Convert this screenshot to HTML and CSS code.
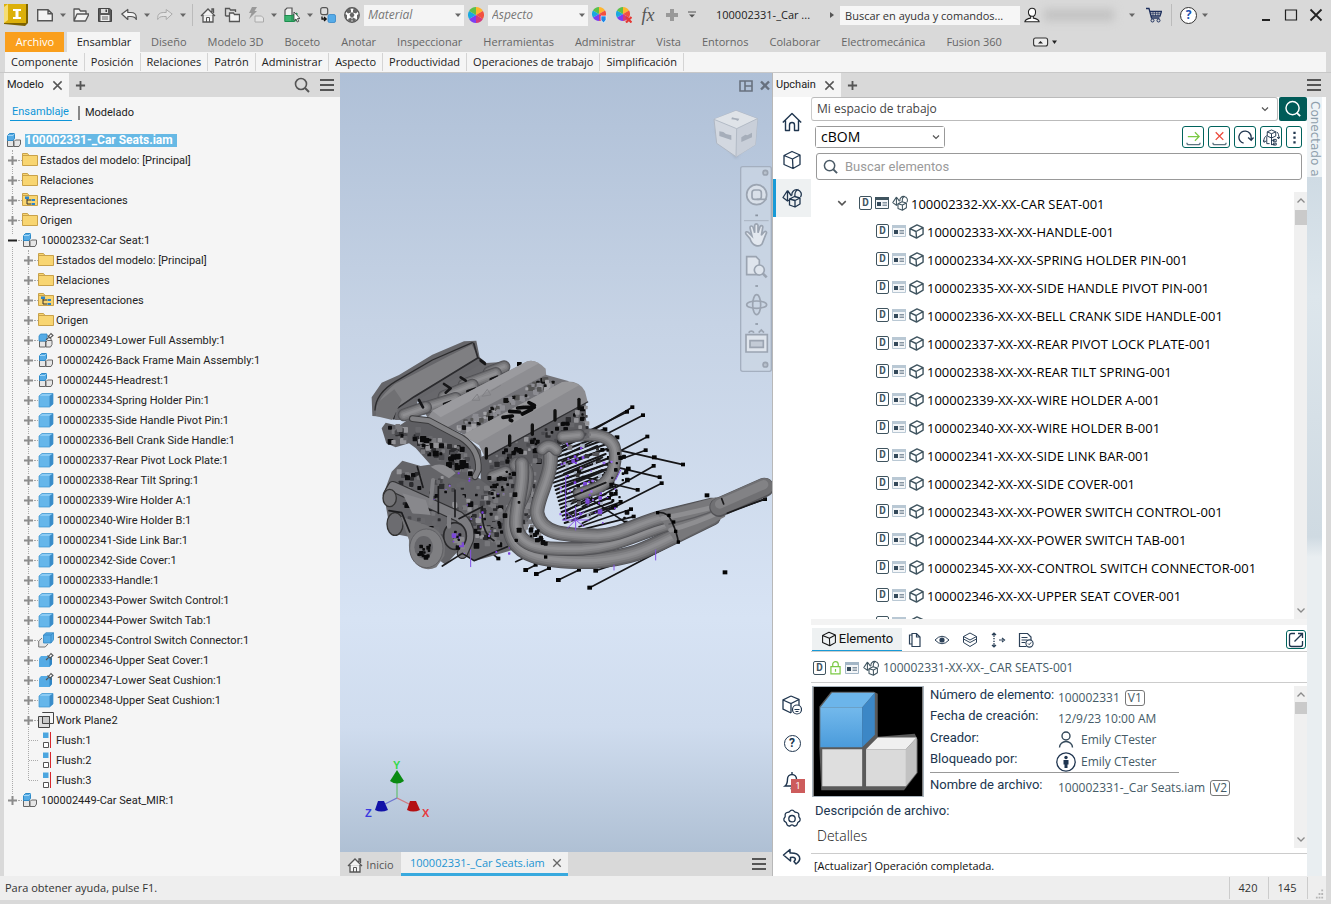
FILE: index.html
```html
<!DOCTYPE html>
<html lang="es">
<head>
<meta charset="utf-8">
<title>100002331-_Car Seats.iam</title>
<link rel="stylesheet" href="styles.css">
</head>
<body>
<svg class="sprite" aria-hidden="true">
  <defs>
    <linearGradient id="cubeface" x1="0" y1="0" x2="0" y2="1"><stop offset="0" stop-color="#73b9ec"/><stop offset="1" stop-color="#4a9bdb"/></linearGradient>
  </defs>
  <symbol id="caret" viewBox="0 0 8 8"><path d="M1 2.500h6L4 6z" fill="#666"/></symbol>
  <symbol id="chev" viewBox="0 0 8 8"><path d="M1 2.500l3 3 3-3" fill="none" stroke="#555" stroke-width="1.200"/></symbol>
  <symbol id="x" viewBox="0 0 12 12"><path d="M1.500 1.500l9 9M10.500 1.500l-9 9" fill="none" stroke="currentColor" stroke-width="1.600"/></symbol>
  <symbol id="plus" viewBox="0 0 12 12"><path d="M6 1v10M1 6h10" fill="none" stroke="#555" stroke-width="2"/></symbol>
  <symbol id="menu" viewBox="0 0 14 14"><path d="M0 2h14M0 7h14M0 12h14" stroke="#555" stroke-width="2"/></symbol>
  <symbol id="search" viewBox="0 0 16 16"><circle cx="7" cy="7" r="5.500" fill="none" stroke="currentColor" stroke-width="1.600"/><path d="M11 11l4 4" stroke="currentColor" stroke-width="2"/></symbol>
  <symbol id="home" viewBox="0 0 16 16"><path d="M1 9l7-7 7 7M3 8v7h10V8M12 5V2h1.500v4" fill="#f2f2f2" stroke="#555" stroke-width="1.300"/><path d="M6.500 15v-4.500h3V15" fill="none" stroke="#555"/></symbol>
  <symbol id="cube" viewBox="0 0 20 20"><path d="M10 1.500l8 3.500v9.500L11 18.500 2 14.500V5.500zM2 5.500l8.500 3.500L18 5M10.500 9l.5 9.500" fill="none" stroke="currentColor" stroke-width="1.300" stroke-linejoin="round"/></symbol>
  <symbol id="cubebold" viewBox="0 0 16 16"><path d="M8.500 1L15 3.800v7L8 15 1 11.500V5zM1 5l6.500 3L15 3.800M7.500 8L8 15" fill="none" stroke="#3f545f" stroke-width="1.500" stroke-linejoin="round"/></symbol>
  <symbol id="shapes" viewBox="0 0 20 20"><g fill="none" stroke="currentColor" stroke-width="1.300" stroke-linejoin="round"><path d="M5.500 2.500L1 9.500l4.500 3.500 2-1M5.500 2.500L9.500 8M5.500 2.500V13"/><path d="M10 7.500a4.700 4.700 0 1 1 8.500 1.500M13 8.500C12.500 5 14 2 16.500 1.500"/><path d="M7.500 11l5-2.500L18 10v6l-5 3-5.500-2zM7.500 11l5.500 1.500L18 10M13 12.500V19"/></g></symbol>
  <symbol id="asm" viewBox="0 0 16 16"><path d="M1.500 8.500h6v6h-6zM8 9.500l1.500-1.500h5v4L13 14.500H8z" fill="#e6e6e6" stroke="#666"/><path d="M1.500 3.500l2-2h5v5l-1.500 2H1.500z" fill="#55abe5" stroke="#2e8ac8"/><path d="M1.500 3.500H7l1.500-2" fill="none" stroke="#a3d6f6"/></symbol>
  <symbol id="part" viewBox="0 0 16 16"><path d="M1 4l3-2.500h11V12l-3.500 3H1z" fill="#65b6ea"/><path d="M1 4l3-2.500h11L11.500 4z" fill="#8bcbf4"/><path d="M11.500 4L15 1.500V12l-3.500 3z" fill="#3a8bc8"/><path d="M1 4l3-2.500h11V12l-3.500 3H1z" fill="none" stroke="#3b93cf" stroke-width=".7"/></symbol>
  <symbol id="pin" viewBox="0 0 16 16"><path d="M8 8l3-3M9.500 3.500l4 4M10.500 4.500l2.500-3 2 2-3 2.500" fill="#fff" stroke="#555" stroke-width="1.100"/></symbol>
  <symbol id="asmpin" viewBox="0 0 16 16"><path d="M1.500 9h6v6h-6zM8 10l1.500-1.500h4.500v4L12.500 15H8z" fill="#e6e6e6" stroke="#666"/><path d="M1 4l1.500-2H9v5L7.500 9H1z" fill="#55abe5" stroke="#2e8ac8" stroke-width=".8"/><use href="#pin"/></symbol>
  <symbol id="partpin" viewBox="0 0 16 16"><path d="M1 6.500L3 4h11v8l-2.500 3H1z" fill="#55abe5"/><path d="M11.500 7L14 5v7l-2.500 3z" fill="#2f85c4"/><use href="#pin"/></symbol>
  <symbol id="partsub" viewBox="0 0 16 16"><path d="M4 6L.7 9v6h6.500L10 12" fill="#e8e8e8" stroke="#777"/><path d="M5.500 3L8 .8h7.500v7L13 11H5.500z" fill="#55abe5" stroke="#2e85c0" stroke-width=".8"/><path d="M5.500 3H13l2.500-2.200M13 3v8" fill="none" stroke="#3080ba" stroke-width=".7"/></symbol>
  <symbol id="folder" viewBox="0 0 16 16"><path d="M.5 1.500h5l1.500 2h8.500v10H.5z" fill="#f8d571" stroke="#c9a24a"/><path d="M1 3.500h6" stroke="#c9a24a"/></symbol>
  <symbol id="rep" viewBox="0 0 16 16"><use href="#folder"/><path d="M5 5v7h4M5 8h4" fill="none" stroke="#333"/><path d="M3 4.500h4V7H3zM9.500 7h3.500v2H9.500zM9.500 11H13v2H9.500z" fill="#2e83c7"/></symbol>
  <symbol id="plane" viewBox="0 0 16 16"><path d="M4.500 1V.5h11v11H12" fill="none" stroke="#444"/><path d="M.5 4.500h11v11H.5z" fill="#ddd" stroke="#444"/><path d="M4.500 4.500h7v7h-7z" fill="#c9c9c9" stroke="#444"/></symbol>
  <symbol id="flush" viewBox="0 0 16 16"><path d="M5 .5h5.500v5.500H5z" fill="#4ca6df"/><path d="M5.500 10.500h5v5h-5z" fill="#fff" stroke="#555"/><path d="M12.500 0v16" stroke="#d8262c"/></symbol>
  <symbol id="card" viewBox="0 0 14 14"><path d="M.5 1.500h13v11H.5z" fill="#f4f6f8" stroke="currentColor"/><path d="M0 1h14v3H0z" fill="currentColor"/><path d="M2 6h4v4H2z" fill="#34495a"/><path d="M7.500 6.500H12M7.500 8H12M7.500 9.500H12" stroke="#7b8b98" stroke-width=".9"/></symbol>
  <symbol id="wheel" viewBox="0 0 16 16"><path d="M8 8V0a8 8 0 0 1 6.900 4z" fill="#ffb52e"/><path d="M8 8l6.900-4a8 8 0 0 1 0 8z" fill="#f2503f"/><path d="M8 8l6.900 4A8 8 0 0 1 8 16z" fill="#d43a7a"/><path d="M8 8v8a8 8 0 0 1-6.900-4z" fill="#7b3ff2"/><path d="M8 8l-6.900 4a8 8 0 0 1 0-8z" fill="#19a8e0"/><path d="M8 8L1.100 4A8 8 0 0 1 8 0z" fill="#5cc04a"/></symbol>
  <symbol id="user" viewBox="0 0 18 18"><path d="M9 1.500a4 4 0 0 1 4 4c0 3-1.500 5-4 5s-4-2-4-5a4 4 0 0 1 4-4zM7.500 10.500v2C4 13 1.500 14 1 16.500h16c-.5-2.500-3-3.500-6.500-4v-2" fill="#fff" stroke="#222" stroke-width="1.200"/></symbol>
  <symbol id="up" viewBox="0 0 8 8"><path d="M.5 5.500L4 2l3.500 3.500" fill="none" stroke="#8a8a8a" stroke-width="1.300"/></symbol>
  <symbol id="down" viewBox="0 0 8 8"><path d="M.5 2.500L4 6l3.500-3.500" fill="none" stroke="#8a8a8a" stroke-width="1.300"/></symbol>
</svg>

<header class="titlebar">
  <div class="quick">
    <button class="logo" aria-label="Inventor"><svg viewBox="0 0 24 22"><path d="M0 3l3-3h21v19l-3 3-21-2z" fill="#7d6200"/><path d="M0 0h22v19H0z" fill="#dcb00a"/><path d="M0 3l4-3v16l-4 3z" fill="#f5dd74"/><path d="M9 5h8v2h-2.500v6H17v2H9v-2h2.500V7H9z" fill="#fff"/></svg></button>
    <button class="tb" aria-label="Nuevo"><svg viewBox="0 0 16 16"><path d="M.7 2.700H11l4.300 4v7H.7zM11 2.700v4h4.300" fill="#f3f3f3" stroke="#555" stroke-width="1.400"/></svg></button>
    <button class="drop" aria-label="Más"><svg><use href="#caret"/></svg></button>
    <button class="tb" aria-label="Abrir"><svg viewBox="0 0 16 16"><path d="M1 14V2h5l1.500 2H13v3M1 14l3-7h12l-3.500 7z" fill="#f3f3f3" stroke="#555" stroke-width="1.300" stroke-linejoin="round"/></svg></button>
    <button class="tb" aria-label="Guardar"><svg viewBox="0 0 16 16"><path d="M1.500 1.500h11L14.500 3v11.500h-13z" fill="#5a5a5a" stroke="#444"/><path d="M4 2h7v4H4z" fill="#ddd"/><path d="M8.500 2.500h1.500V5H8.500z" fill="#444"/><path d="M3.500 8h9v6h-9z" fill="#eee"/><path d="M5 10h6M5 12h6" stroke="#666"/></svg></button>
    <button class="tb" aria-label="Deshacer"><svg viewBox="0 0 16 16"><path d="M.8 7l6-4.500v3h3c3.500 0 5.500 2 5.500 5v2c-1-2-2.500-3-5.500-3h-3v3z" fill="#f3f3f3" stroke="#555" stroke-width="1.200" stroke-linejoin="round"/></svg></button>
    <button class="drop" aria-label="Más"><svg><use href="#caret"/></svg></button>
    <button class="tb" aria-label="Rehacer"><svg viewBox="0 0 16 16"><path d="M15.200 7l-6-4.500v3h-3C2.700 5.500.7 7.500.7 10.500v2c1-2 2.500-3 5.500-3h3v3z" fill="#e2e2e2" stroke="#aaa" stroke-linejoin="round"/></svg></button>
    <button class="drop" aria-label="Más"><svg><use href="#caret"/></svg></button>
    <span class="vsep"></span>
    <button class="tb" aria-label="Inicio"><svg><use href="#home"/></svg></button>
    <button class="tb" aria-label="Carpetas"><svg viewBox="0 0 16 16"><path d="M1.500 9V1.500h4l1 1.500h5v2M1.500 9H5" fill="none" stroke="#555" stroke-width="1.300"/><path d="M5.500 14.500V6h4l1 1.500h5v7z" fill="#f3f3f3" stroke="#555" stroke-width="1.300"/></svg></button>
    <button class="tb" aria-label="Actualizar"><svg viewBox="0 0 16 16"><path d="M4 0h5L6.500 4H9L1 12l2.500-6H1z" fill="#999"/><path d="M7 9v6h8.500v-4l-2-2z" fill="#e5e5e5" stroke="#aaa"/></svg></button>
    <button class="drop" aria-label="Más"><svg><use href="#caret"/></svg></button>
    <button class="tb" aria-label="Seleccionar"><svg viewBox="0 0 16 16"><path d="M1 9V3l2-2h5v7" fill="#eee" stroke="#555" stroke-width="1.200"/><path d="M.8 8.500H8l5-2.500v7l-3 1.500H.8z" fill="#3cb371" stroke="#1d8d4e"/><path d="M8 8v6" stroke="#1d8d4e"/><path d="M10 5v8.500l2-1.500 1.200 3 1.500-.7-1.200-2.800H16z" fill="#fff" stroke="#333" stroke-width=".8"/></svg></button>
    <button class="drop" aria-label="Más"><svg><use href="#caret"/></svg></button>
    <button class="tb" aria-label="Vincular"><svg viewBox="0 0 16 16"><rect x=".7" y=".7" width="7" height="7" rx="2" fill="#ddd" stroke="#555" stroke-width="1.200"/><path d="M2 9.500V12h3.500M4 10l2.200 2L4 14" fill="none" stroke="#111" stroke-width="1.300"/><rect x="8" y="7.500" width="7.500" height="8" rx="1.500" fill="#55abe8" stroke="#3687c8" stroke-width=".8"/></svg></button>
    <button class="tb" aria-label="Material"><svg viewBox="0 0 16 16"><circle cx="8" cy="8" r="7.200" fill="#fff" stroke="#555" stroke-width="1.400"/><path d="M4 1.500l3 1v3l-3 1-2-2zM9 2.500l3-1 2 3-2 2-3-1zM7 5.500h2l1.500 2.500L9 10.500H7L5.500 8zM1 7l2 1v3l-1.500 1L.8 9zM15 7l-2 1v3l1.500 1 .7-3zM4 12l3-1.500 1 2-1 2.500-2-.5zM12 12l-3-1.500-1 2 1 2.500 2-.5z" fill="#666"/></svg></button>
    <label class="combo combo--dark"><select aria-label="Material"><option>Material</option></select><svg><use href="#caret"/></svg></label>
    <button class="tb" aria-label="Aspecto"><svg><use href="#wheel"/></svg></button>
    <label class="combo combo--dark"><select aria-label="Aspecto"><option>Aspecto</option></select><svg><use href="#caret"/></svg></label>
    <button class="tb" aria-label="Ajustar"><svg viewBox="0 0 16 16"><use href="#wheel" width="14" height="14"/><path d="M9 9h5v4l-2.500 3L9 13z" fill="#1e88e5" stroke="#fff" stroke-width=".6"/></svg></button>
    <button class="tb" aria-label="Borrar"><svg viewBox="0 0 16 16"><use href="#wheel" width="14" height="14"/><path d="M10 10l5.500 5.500M15.500 10L10 15.500" stroke="#e53935" stroke-width="2.200"/></svg></button>
    <button class="tb fx">fx</button>
    <button class="tb" aria-label="Añadir"><svg viewBox="0 0 16 16"><path d="M8 2v12M2 8h12" stroke="#999" stroke-width="4"/></svg></button>
    <button class="drop drop--wide" aria-label="Personalizar"><svg viewBox="0 0 8 8"><path d="M0 1h8" stroke="#555"/><path d="M1 3.500h6L4 6.500z" fill="#555"/></svg></button>
  </div>
  <span class="doc">100002331-_Car ...</span>
  <svg class="tri" viewBox="0 0 8 8"><path d="M2 1l4 3-4 3z" fill="#555"/></svg>
  <input class="help" type="text" aria-label="Buscar" value="Buscar en ayuda y comandos...">
  <div class="account">
    <button class="tb" aria-label="Cuenta"><svg><use href="#user"/></svg></button>
    <span class="smudge"></span>
    <button class="drop" aria-label="Más"><svg><use href="#caret"/></svg></button>
    <button class="tb" aria-label="Carrito"><svg viewBox="0 0 16 16"><path d="M0 1.500h3l2.500 9.500h8M4 4.500h11.500L14 9H5" fill="none" stroke="#1d2f5c" stroke-width="1.300"/><path d="M7 4.500V9M9.500 4.500V9M12 4.500V9M4.500 6.700h10" stroke="#1d2f5c" stroke-width=".7"/><circle cx="6.500" cy="13.500" r="1.500" fill="none" stroke="#1d2f5c"/><circle cx="12.500" cy="13.500" r="1.500" fill="none" stroke="#1d2f5c"/></svg></button>
    <span class="vsep"></span>
    <button class="tb ask" aria-label="Ayuda">?</button>
    <button class="drop" aria-label="Más"><svg><use href="#caret"/></svg></button>
  </div>
  <div class="window">
    <button aria-label="Minimizar"><svg viewBox="0 0 14 14"><path d="M3 12h8" stroke="#222" stroke-width="2"/></svg></button>
    <button aria-label="Maximizar"><svg viewBox="0 0 14 14"><path d="M1.500 2h11v10h-11z" fill="none" stroke="#222" stroke-width="1.200"/></svg></button>
    <button aria-label="Cerrar"><svg viewBox="0 0 14 14"><path d="M1.500 1.500l11 11M12.500 1.500l-11 11" stroke="#222" stroke-width="1.800"/></svg></button>
  </div>
</header>

<nav class="tabs">
  <button class="tabs__file">Archivo</button>
  <button class="tabs__on">Ensamblar</button>
  <button>Diseño</button><button>Modelo 3D</button><button>Boceto</button><button>Anotar</button><button>Inspeccionar</button><button>Herramientas</button><button>Administrar</button><button>Vista</button><button>Entornos</button><button>Colaborar</button><button>Electromecánica</button><button>Fusion 360</button>
  <button class="tabs__fold" aria-label="Contraer"><svg viewBox="0 0 24 10"><rect x=".6" y="1" width="14" height="8" rx="2" fill="#eee" stroke="#333" stroke-width="1.100"/><path d="M5 6.500h5L7.500 4z" fill="#222"/><path d="M19 3.500h5l-2.500 3.500z" fill="#222"/></svg></button>
</nav>
<nav class="ribbon">
  <button>Componente</button><button>Posición</button><button>Relaciones</button><button>Patrón</button><button>Administrar</button><button>Aspecto</button><button>Productividad</button><button>Operaciones de trabajo</button><button>Simplificación</button>
</nav>

<main class="work">
  <section class="model">
    <div class="dock">
      <button class="dock__tab">Modelo <svg><use href="#x"/></svg></button>
      <button class="dock__add" aria-label="Añadir"><svg><use href="#plus"/></svg></button>
      <span class="grow"></span>
      <button class="dock__find" aria-label="Buscar"><svg><use href="#search"/></svg></button>
      <button class="dock__menu" aria-label="Menú"><svg><use href="#menu"/></svg></button>
    </div>
    <div class="modes"><a href="#asm" class="modes__on">Ensamblaje</a><a href="#mod">Modelado</a></div>
    <div class="root"><svg><use href="#asm"/></svg><strong>100002331-_Car Seats.iam</strong></div>
    <ul class="tree" id="tree"></ul>
  </section>

  <section class="stage">
    <div class="canvas">
      <svg class="wintools" viewBox="0 0 32 12"><path d="M1 1h12v10H1z" fill="none" stroke="#5c6470" stroke-width="1.600"/><path d="M6 1v10M6 6h7" stroke="#5c6470" stroke-width="1.600"/><path d="M22 1.500l8 8M30 1.500l-8 8" stroke="#5c6470" stroke-width="2.400"/></svg>
      <svg class="viewcube" viewBox="0 0 144 150"><path d="M8 60l64 88 56-88z" fill="#8f9caf" opacity=".5" filter="blur(4px)"/><path d="M6 28L72 2l64 24-6 78-58 36L14 100z" fill="#d3d8e0" stroke="#b0b8c4" stroke-width="3"/><path d="M6 28L72 2l64 24-62 30z" fill="#dfe3e8"/><path d="M74 56l62-30-6 78-58 36z" fill="#c9cfd9"/><path d="M6 28l68 28-2 84M74 56l62-30" fill="none" stroke="#b3bbc6" stroke-width="3"/><path d="M22 64l12 2 8 6 16 4v14l-18-6-18-6zM88 82l12-8 6 2 14-8v14L88 96zM60 22l8 2 14 2-4 7-8-4-12-1z" fill="#a6aeba"/></svg>
      <svg class="navbar" viewBox="0 0 96 618"><rect x="2" y="2" width="92" height="614" rx="6" fill="#cbd5e3" fill-opacity=".75" stroke="#a4afbf" stroke-width="4"/><g fill="none" stroke="#9ba4b1" stroke-width="5"><circle cx="76" cy="20" r="7" fill="#b7c0cc"/><circle cx="50" cy="86" r="30" fill="#d9e0e9"/><rect x="36" y="72" width="28" height="28" rx="8"/><path d="M50 100h30"/><path d="M12 164h74" stroke-width="2"/><path d="M30 218l-12-14c-4-8 4-8 8-4l10 10-6-24c0-8 8-8 10 0l4 14v-22c2-6 8-6 10 0v22l6-18c4-6 10-2 8 4l-4 22 8-10c6-4 10 0 6 6l-12 30c-8 10-28 8-36-16z" fill="#e3e8ef"/><path d="M20 272h28l10 10v44H20z" fill="#dfe5ed"/><circle cx="58" cy="312" r="15" fill="#dfe5ed"/><path d="M68 322l12 12" stroke-width="8"/><ellipse cx="50" cy="416" rx="30" ry="11"/><ellipse cx="50" cy="416" rx="12" ry="30"/><path d="M18 506h64v52H18z" fill="#dfe5ed"/><path d="M30 524h40v20H30z" fill="#c3cbd6"/><path d="M26 500c4-6 12-6 16 0M56 500l8-8 8 8"/><circle cx="76" cy="596" r="7" fill="#b7c0cc"/></g><path d="M46 148h8M46 360h8M46 474h8" stroke="#8993a0" stroke-width="5"/></svg>
      <svg class="engine" viewBox="0 0 1269 900" id="engine"></svg>
      <svg class="triad" viewBox="0 0 68 62"><path d="M33 38V14" stroke="#6bbf78" stroke-width="1.300"/><path d="M33 38l-16 8" stroke="#6d74d0" stroke-width="1.300"/><path d="M33 38l16 8" stroke="#d07a80" stroke-width="1.300"/><path d="M33 10l-7 11q7 5 14 0z" fill="#0a8a12"/><path d="M14 41h6l4 9q-7 3-13 0z" fill="#1212a8"/><path d="M52 41h-6l-3 9q6 3 13 0z" fill="#b40f12"/><text x="29" y="9" fill="#35d94a">Y</text><text x="1" y="57" fill="#3a3ae0">Z</text><text x="58" y="57" fill="#e63b40">X</text></svg>
    </div>
    <div class="files">
      <button class="files__home"><svg><use href="#home"/></svg>Inicio</button>
      <button class="files__on">100002331-_Car Seats.iam <svg><use href="#x"/></svg></button>
      <span class="grow"></span>
      <button class="dock__menu" aria-label="Menú"><svg><use href="#menu"/></svg></button>
    </div>
  </section>

  <section class="upchain">
    <div class="dock">
      <button class="dock__tab">Upchain <svg><use href="#x"/></svg></button>
      <button class="dock__add" aria-label="Añadir"><svg><use href="#plus"/></svg></button>
      <span class="grow"></span>
      <button class="dock__menu" aria-label="Menú"><svg><use href="#menu"/></svg></button>
    </div>
    <div class="upchain__body">
      <nav class="rail">
        <button aria-label="Inicio"><svg viewBox="0 0 20 20"><path d="M.8 10.500L10 1.500l9.200 9M3.500 8.500V18.500h4V13a2.500 2.500 0 0 1 5 0v5.500h4V8.500" fill="none" stroke="currentColor" stroke-width="1.400" stroke-linejoin="round"/></svg></button>
        <button aria-label="Elementos"><svg><use href="#cube"/></svg></button>
        <button class="rail__on" aria-label="BOM"><svg><use href="#shapes"/></svg></button>
        <span class="grow"></span>
        <button aria-label="Estado"><svg viewBox="0 0 20 20"><path d="M9 1l8 3.500v6M9 18l-8-4V5l8-4M1 5l8 3.500L17 4.500M9 8.500V18" fill="none" stroke="currentColor" stroke-width="1.300"/><circle cx="15" cy="14.500" r="4.500" fill="#fff" stroke="currentColor" stroke-width="1.200"/><path d="M12.500 14.500h5M13.500 16.500h3" stroke="currentColor"/></svg></button>
        <button class="rail__ask" aria-label="Ayuda"><span>?</span></button>
        <button class="rail__bell" aria-label="Avisos"><svg viewBox="0 0 20 20"><path d="M3 15c2-1.500 2.500-3 2.500-7a4.500 4.500 0 0 1 9 0c0 4 .5 5.500 2.500 7zM8.500 17.500h3M10 1v2" fill="none" stroke="currentColor" stroke-width="1.400"/></svg><b>1</b></button>
        <button aria-label="Ajustes"><svg viewBox="0 0 20 20"><path d="M7.700 2.500a2.600 2.600 0 0 1 4.600 0 2.600 2.600 0 0 0 2.200.8 2.600 2.600 0 0 1 2.300 3.200 2.600 2.600 0 0 0 .7 2.300 2.600 2.600 0 0 1-.9 4.100 2.600 2.600 0 0 0-1.300 1.900 2.600 2.600 0 0 1-3.500 2 2.600 2.600 0 0 0-3.600 0 2.600 2.600 0 0 1-3.500-2 2.600 2.600 0 0 0-1.300-1.900 2.600 2.600 0 0 1-.9-4.100 2.600 2.600 0 0 0 .7-2.300 2.600 2.600 0 0 1 2.300-3.200 2.600 2.600 0 0 0 2.200-.8z" fill="none" stroke="currentColor" stroke-width="1.300"/><circle cx="10" cy="9.700" r="3.200" fill="none" stroke="currentColor" stroke-width="1.300"/></svg></button>
        <button aria-label="Volver"><svg viewBox="0 0 20 20"><path d="M8 2.500L1.500 8l7 6V10.500c4-1 6.500 1 3.500 4l2 2.500c6-4 5-11.500-6-11z" fill="none" stroke="currentColor" stroke-width="1.500" stroke-linejoin="round"/></svg></button>
      </nav>
      <div class="pane">
        <div class="space">
          <label class="combo combo--space"><select aria-label="Espacio"><option>Mi espacio de trabajo</option></select><svg><use href="#chev"/></svg></label>
          <button class="space__go" aria-label="Buscar"><svg viewBox="0 0 20 20"><circle cx="9.500" cy="9" r="7.300" fill="none" stroke="#fff" stroke-width="1.600"/><path d="M14 14l4 4" stroke="#fff" stroke-width="2"/></svg></button>
        </div>
        <div class="bomrow">
          <label class="combo combo--bom"><select aria-label="BOM"><option>cBOM</option></select><svg><use href="#chev"/></svg></label>
          <span class="grow"></span>
          <button aria-label="Entregar"><svg viewBox="0 0 18 18"><path d="M3 8h12M10.500 3.500L15 8l-4.500 4.500" fill="none" stroke="#7ac943" stroke-width="1.300"/><path d="M2 14.500q0 2 2 2h10q2 0 2-2" fill="none" stroke="#5c7480" stroke-width="1.400"/></svg></button>
          <button aria-label="Cancelar"><svg viewBox="0 0 18 18"><path d="M5 3.500l8 8M13 3.500l-8 8" stroke="#ec4a3c" stroke-width="1.400"/><path d="M2 14.500q0 2 2 2h10q2 0 2-2" fill="none" stroke="#5c7480" stroke-width="1.400"/></svg></button>
          <button aria-label="Recargar"><svg viewBox="0 0 18 18"><path d="M7 15A6.500 6.500 0 1 1 15 9v2.500M11.800 9l3.200 3 2.500-3" fill="none" stroke="#20364f" stroke-width="1.400"/></svg></button>
          <button aria-label="Sincronizar"><svg viewBox="0 0 18 18"><path d="M9 1l4.500 2v4.500L9 9.500l-4.500-2V3zM4.500 3L9 5l4.500-2M9 5v12M9 12h3.500M9 16.500h3.500M11 11h3v2.500h-3zM11 15h3v2h-3zM1 14c-.5-4 1-6 3-7M0 11.500L1.200 14l2.300-1.500M4 8v7.500h3M14.500 3c2 1.500 2.500 4 2 7M15 8.500l1.500 2 1.500-2.500" fill="none" stroke="#20364f"/></svg></button>
          <button class="bomrow__more" aria-label="Más"><svg viewBox="0 0 4 18"><path d="M.8 3h2.400v2.400H.8zM.8 8h2.400v2.400H.8zM.8 13h2.400v2.400H.8z" fill="#20364f"/></svg></button>
        </div>
        <label class="find"><svg><use href="#search"/></svg><input type="text" placeholder="Buscar elementos" aria-label="Buscar elementos"></label>
        <div class="bom">
          <ul class="bom__list" id="bom"></ul>
          <div class="bar"><svg><use href="#up"/></svg><i></i><span class="grow"></span><svg><use href="#down"/></svg></div>
        </div>
        <div class="split"></div>
        <div class="subtabs">
          <button class="subtabs__on"><svg><use href="#cube"/></svg>Elemento</button>
          <button aria-label="Archivos"><svg viewBox="0 0 16 16"><path d="M6 1.500h4.500L14 5v9.500H6zM10.500 1.500V5H14M6 3H3.500v9H6" fill="none" stroke="currentColor" stroke-width="1.200"/></svg></button>
          <button aria-label="Vista"><svg viewBox="0 0 16 16"><path d="M1 8q7-7.500 14 0-7 7.500-14 0z" fill="none" stroke="currentColor"/><circle cx="8" cy="8" r="2.600" fill="currentColor"/></svg></button>
          <button aria-label="Capas"><svg viewBox="0 0 16 16"><path d="M8 1l6.500 3.500L8 8 1.500 4.500zM1.500 7L8 10.500 14.500 7M1.500 4.500V10.500L8 14.500l6.500-4V4.500" fill="none" stroke="currentColor" stroke-linejoin="round"/></svg></button>
          <button aria-label="Flujo"><svg viewBox="0 0 16 16"><path d="M4 5V1.500M2 3l2-2 2 2M4 11v3.500M2 13l2 2 2-2M9 8h4M12 6l2.500 2L12 10" fill="none" stroke="currentColor" stroke-width="1.200"/><path d="M3.300 6h1.400v1.200H3.300zM3.300 8.800h1.400V10H3.300z" fill="currentColor"/></svg></button>
          <button aria-label="Informe"><svg viewBox="0 0 16 16"><path d="M8.500 14.500h-7v-13h8L13 5v3M3.500 5.500h6M3.500 8h6M3.500 10.500h4" fill="none" stroke="currentColor" stroke-width="1.200"/><circle cx="11.500" cy="11.500" r="3.600" fill="#fff" stroke="currentColor" stroke-width="1.100"/><path d="M10 11.500l1.200 1.200 2-2.400" fill="none" stroke="currentColor"/></svg></button>
          <span class="grow"></span>
          <button class="subtabs__pop" aria-label="Abrir"><svg viewBox="0 0 16 16"><path d="M7 1.500H3.500q-2 0-2 2v9q0 2 2 2h9q2 0 2-2V9M6.500 9.500l8-8M10 1.500h4.500V6" fill="none" stroke="#20364f" stroke-width="1.300"/></svg></button>
        </div>
        <div class="item"><span class="d">D</span><svg class="lock" viewBox="0 0 12 16"><path d="M1 7h10v8H1zM3 7V4.500a3 3 0 0 1 6 0V7M6 9.500v3" fill="none" stroke="#7ac943" stroke-width="1.300"/></svg><svg class="card card--mid"><use href="#card"/></svg><svg class="shape"><use href="#shapes"/></svg><span>100002331-XX-XX-_CAR SEATS-001</span></div>
        <div class="detail">
          <div class="detail__main">
            <div class="detail__top">
              <svg class="thumb" viewBox="0 0 112 112"><path d="M0 0h112v112H0z" fill="#000"/><path d="M6 62V20L18 5h44l4 2v44l38-3 3 6v34l-14 18H8z" fill="#5a5a5a"/><path d="M9 64h41v38H9z" fill="#dedede"/><path d="M54 64l12-12h40L95 64z" fill="#f0f0f0"/><path d="M54 64h41v38H54z" fill="#dadada"/><path d="M95 64l11-12v36L95 102z" fill="#c2c2c2"/><path d="M7 21L19 6h44L50 21z" fill="#6cb5ea"/><path d="M7 21h43v41H7z" fill="url(#cubeface)"/><path d="M50 21L63 6v43L50 62z" fill="#3c87c6"/></svg>
              <dl class="meta">
                <div><dt>Número de elemento:</dt><dd>100002331 <em>V1</em></dd></div>
                <div><dt>Fecha de creación:</dt><dd>12/9/23 10:00 AM</dd></div>
                <div><dt>Creador:</dt><dd><svg viewBox="0 0 20 20"><circle cx="10" cy="6" r="4" fill="none" stroke="#34495a" stroke-width="1.400"/><path d="M3.500 17.500a6.500 6 0 0 1 13 0" fill="none" stroke="#34495a" stroke-width="1.400"/></svg>Emily CTester</dd></div>
                <div class="meta__lock"><dt>Bloqueado por:</dt><dd><svg viewBox="0 0 20 20"><circle cx="10" cy="10" r="9.200" fill="none" stroke="#1f3550" stroke-width="1.300"/><circle cx="10" cy="5.500" r="1.700" fill="#1f3550"/><path d="M7.500 8h5v4.500h-1V16h-3v-3.500h-1z" fill="#1f3550"/></svg>Emily CTester</dd></div>
                <div><dt>Nombre de archivo:</dt><dd>100002331-_Car Seats.iam <em>V2</em></dd></div>
              </dl>
            </div>
            <p class="desc">Descripción de archivo:</p>
            <h2>Detalles</h2>
          </div>
          <div class="bar"><svg><use href="#up"/></svg><i></i><span class="grow"></span><svg><use href="#down"/></svg></div>
        </div>
        <p class="log">[Actualizar] Operación completada.</p>
      </div>
      <aside class="edge"><span>Conectado a</span></aside>
    </div>
  </section>
</main>

<footer class="status"><span>Para obtener ayuda, pulse F1.</span><span class="grow"></span><span class="status__n">420</span><span class="status__n">145</span><svg viewBox="0 0 10 10"><path d="M7 0h2v2H7zM4 4h2v2H4zM7 4h2v2H7zM1 8h2v2H1zM4 8h2v2H4zM7 8h2v2H7z" fill="#b5b5b5"/></svg></footer>
<script src="app.js"></script>
</body>
</html>
```
FILE: styles.css
```css
* { box-sizing: border-box; }
body { margin: 0; min-height: 100vh; display: flex; flex-direction: column; background: #d9d9d9; padding-bottom: 4px; font: 11px/16px "Open Sans", "Noto Sans", sans-serif; color: #222; }
button { border: 0; background: none; padding: 0; margin: 0; font: inherit; color: inherit; display: flex; align-items: center; justify-content: center; flex: none; white-space: nowrap; }
ul, dl, dd, p, h2 { margin: 0; padding: 0; list-style: none; }
svg { flex: none; display: block; }
.sprite { position: absolute; width: 0; height: 0; }
.grow { flex: 1; }

.titlebar { height: 32px; display: flex; align-items: center; padding: 0 4px 2px; }
.quick, .account, .window { display: flex; align-items: center; flex: none; }
.logo { width: 24px; margin-right: 5px; }
.logo svg { width: 24px; height: 22px; }
.tb { width: 24px; height: 24px; }
.tb svg { width: 16px; height: 16px; }
.drop { width: 12px; height: 24px; }
.drop svg { width: 8px; height: 8px; }
.drop--wide { width: 16px; }
.vsep { width: 7px; height: 22px; border-left: 1px solid #bbb; }
.quick .vsep { width: 4px; margin-left: 3px; }
.combo { display: grid; align-items: center; }
.combo select, .combo svg { grid-area: 1 / 1; }
.combo select { appearance: none; width: 100%; border: 0; margin: 0; font: inherit; color: inherit; background: #f4f4f4; padding: 0 4px; }
.combo svg { justify-self: end; width: 8px; height: 8px; margin-right: 2px; }
.combo--dark { width: 100px; font-style: italic; font-size: 12px; color: #777; }
.combo--dark select { height: 21px; }
.fx { font: italic 18px/20px "Liberation Serif", serif; color: #555; }
.doc { margin-left: 16px; flex: none; }
.tri { width: 8px; height: 8px; margin: 0 4px 0 18px; }
.help { width: 180px; height: 19px; border: 0; background: #f6f6f6; padding: 0 5px; font: inherit; color: #333; }
.smudge { width: 70px; height: 12px; margin: 0 12px 0 0; background: #c3c3c3; filter: blur(4px); }
.account .vsep { margin-left: 5px; }
.account .drop { margin-right: 4px; }
.ask { width: 17px; height: 17px; border: 1px solid #333; border-radius: 9px; background: #fff; color: #2050b0; font-weight: bold; font-size: 12px; margin: 0 2px; }
.window { margin-left: auto; gap: 11px; padding: 0 4px 0 10px; }
.window svg { width: 14px; height: 14px; }

.tabs { display: flex; height: 20px; padding: 0 5px; color: #666; }
.tabs button { padding: 0 10px 0 11px; }
.tabs .tabs__file { background: #fa9f1c; color: #fff; width: 59px; margin-right: 3px; }
.tabs .tabs__on { background: #f5f5f5; color: #222; width: 73px; }
.tabs .tabs__fold { margin-left: 10px; }
.tabs__fold svg { width: 24px; height: 10px; }
.ribbon { display: flex; align-items: center; height: 20px; margin: 0 5px; background: #f5f5f5; }
.ribbon button { padding: 0 6px; height: 18px; border-right: 1px solid #d4d4d4; }

.work { flex: 1; display: flex; border-top: 1px solid #c8c8c8; padding: 0 5px 0 4px; }
.model { flex: none; width: 336px; background: #f5f5f5; font: 11px/20px Roboto, sans-serif; }
.dock { display: flex; height: 24px; background: #d9d9d9; align-items: stretch; }
.dock__tab { background: #f5f5f5; padding: 0 6px 0 3px; gap: 8px; font: 11px/24px Roboto, sans-serif; color: #222; }
.dock__tab svg { width: 11px; height: 11px; color: #555; }
.dock__add { width: 23px; }
.dock__add svg { width: 11px; height: 11px; }
.dock__find svg { width: 16px; height: 16px; color: #555; margin-right: 10px; }
.dock__menu { margin-right: 6px; }
.dock__menu svg { width: 14px; height: 14px; }
.modes { display: flex; padding: 7px 6px 0; gap: 6px; align-items: center; }
.modes a { color: #222; text-decoration: none; line-height: 14px; padding-left: 5px; border-left: 2px solid #888; }
.modes .modes__on { color: #0e95d8; border-left: 0; border-bottom: 1px solid #0e95d8; line-height: 16px; padding: 0 3px 0 2px; }
.root { display: flex; align-items: center; height: 20px; margin-top: 9px; padding-left: 2px; gap: 3px; }
.root svg { width: 16px; height: 16px; }
.root strong { background: #67b9e5; color: #fff; font-size: 12px; line-height: 13px; padding-right: 4px; }
.tree { position: relative; }
.tree ul { position: relative; padding-left: 16px; }
.tree::before, .tree ul::before { content: ""; position: absolute; top: 0; bottom: 10px; left: 8px; border-left: 1px dotted #aaa; }
.tree ul::before { left: 24px; }
.row { display: flex; align-items: center; height: 20px; padding-left: 3px; position: relative; }
.row button, .row .leaf { width: 11px; height: 11px; background: #f5f5f5; }
.row .leaf { background: linear-gradient(90deg, #f5f5f5 5px, transparent 5px); }
.row .stub { width: 4px; border-top: 1px dotted #aaa; }
.row .leaf + .stub { width: 9px; margin-left: -5px; }
.row button svg { width: 9px; height: 9px; }
.row > svg { width: 16px; height: 16px; margin-right: 2px; }
.row > span:last-child { padding-top: 1px; }
.row--part > svg { margin-right: 3px; }

.stage { flex: 1 1 433px; display: flex; flex-direction: column; min-width: 0; border-right: 1px solid #b8b8b8; }
.canvas { flex: 1; position: relative; overflow: hidden; background: linear-gradient(#afc0d7, #c6d3e5 32%, #d7e3f4 70%, #cfdcee 84%, #afc0d4); }
.canvas svg { position: absolute; }
.wintools { right: 1px; top: 7px; width: 32px; height: 12px; opacity: .85; }
.viewcube { right: 12px; top: 37px; width: 48px; height: 50px; }
.navbar { right: 0; top: 93px; width: 32px; height: 206px; }
.engine { right: 0; top: 247px; width: 423px; height: 300px; }
.triad { left: 24px; bottom: 30px; width: 68px; height: 62px; font: bold 11px "Liberation Sans", sans-serif; }
.files { display: flex; height: 24px; background: #d9d9d9; }
.files__home { width: 61px; gap: 3px; color: #555; padding-top: 2px; }
.files__home svg { width: 16px; height: 16px; }
.files__on { background: #f0f0f0; border-bottom: 3px solid #38a9de; color: #1d94d2; padding: 0 6px 0 9px; gap: 7px; line-height: 20px; }
.files__on svg { width: 10px; height: 10px; color: #666; }

.upchain { flex: 0 0 553px; display: flex; flex-direction: column; background: #fff; }
.upchain > .dock .dock__menu { margin-right: 5px; }
.upchain__body { flex: 1; display: flex; min-height: 0; }
.rail { flex: none; width: 38px; display: flex; flex-direction: column; padding-top: 6px; color: #20364f; }
.rail button { width: 38px; height: 38px; position: relative; }
.rail svg { width: 20px; height: 20px; }
.rail .rail__on { background: #eef1f2; border-left: 3px solid #189ad6; padding-right: 3px; }
.rail__ask span { width: 17px; height: 17px; border: 1px solid #20364f; border-radius: 9px; font: bold 12px/15px Roboto, sans-serif; }
.rail__bell b { position: absolute; left: 18px; top: 17px; width: 14px; height: 14px; background: #cd5c5c; color: #fff; font: 9px/14px Roboto, sans-serif; }
.pane { flex: 1; min-width: 0; display: flex; flex-direction: column; }
.space { display: flex; height: 24px; }
.combo--space { flex: 1; border: 1px solid #bbb; border-left-color: #ccc; border-radius: 3px; font-size: 12px; color: #444; }
.combo--space select, .combo--bom select { background: #fff; padding-left: 5px; }
.combo--space svg { margin-right: 8px; }
.space__go { width: 28px; margin-left: 1px; background: #005b58; border-radius: 2px; }
.space__go svg { width: 18px; height: 18px; }
.bomrow { display: flex; gap: 4px; margin: 5px 5px 0 4px; height: 22px; }
.bomrow button { width: 22px; border: 1px solid #00635d; border-radius: 3px; }
.bomrow button svg { width: 17px; height: 17px; }
.bomrow .bomrow__more { width: 16px; }
.combo--bom { width: 130px; border: 1px solid #999; border-radius: 3px; font: 14px/20px "Open Sans", sans-serif; color: #000; }
.combo--bom svg { margin-right: 4px; }
.find { display: flex; align-items: center; margin: 5px 5px 0; height: 27px; border: 1px solid #999; border-radius: 3px; padding-left: 6px; gap: 7px; }
.find svg { width: 15px; height: 15px; color: #4a5a66; }
.find input { flex: 1; border: 0; padding: 0; font: 13px/20px Roboto, sans-serif; outline: 0; }
.find input::placeholder { color: #9a9a9a; opacity: 1; }
.bom { display: flex; flex: 1 1 426px; min-height: 200px; height: 0; margin-top: 12px; }
.bom__list { flex: 1; overflow: hidden; padding-left: 65px; font: 13px/26px "Open Sans", sans-serif; color: #000; }
.bom__list li { height: 28px; display: flex; align-items: center; gap: 3px; }
.bom__list .label { padding-top: 1px; }
.bom__list .bom__top { margin: -3px 0 0 -40px; }
.twist { width: 8px; height: 8px; margin: 0 10px 0 2px; }
.twist svg { width: 10px; height: 10px; }
.d { width: 13px; height: 14px; flex: none; border: 1px solid #3f545f; border-radius: 2px; font: bold 10px/12px Roboto, sans-serif; text-align: center; color: #3f545f; }
.card { width: 14px; height: 14px; color: #b9c8d4; }
.card--dark { color: #3f545f; }
.card--mid { color: #a3b6c6; }
.cb { width: 15px; height: 15px; }
.shape { width: 16px; height: 16px; color: #3f545f; }
.bar { flex: none; width: 13px; background: #f0f0f0; display: flex; flex-direction: column; align-items: center; padding: 5px 0; }
.bar svg { width: 8px; height: 8px; }
.bar i { width: 12px; height: 15px; background: #cacaca; margin-top: 5px; }
.detail .bar i { height: 12px; margin-top: 3px; }
.split { height: 6px; background: #f3f3f3; }
.subtabs { display: flex; height: 27px; padding: 3px 1px 0; gap: 12px; border-bottom: 1px solid #ccc; color: #2c4158; align-items: center; }
.subtabs svg { width: 16px; height: 16px; }
.subtabs .subtabs__on { align-self: stretch; width: 90px; margin-right: -8px; background: #eef1f2; border-bottom: 1px solid #189ad6; gap: 2px; font: 13px/20px Roboto, sans-serif; color: #111; }
.subtabs .subtabs__pop { width: 20px; height: 19px; border: 1px solid #00635d; border-radius: 3px; }
.item { display: flex; align-items: center; height: 31px; padding: 1px 2px 0; border-bottom: 1px solid #ccc; gap: 4px; font-size: 12px; color: #445a66; }
.item .lock { width: 11px; height: 15px; }
.detail { display: flex; padding: 3px 0 5px; }
.detail__main { flex: 1; min-width: 0; }
.detail__top { display: flex; gap: 6px; padding-left: 1px; }
.thumb { width: 112px; height: 111px; border: 1px solid #a9b4bd; }
.meta { font-size: 12px; color: #445a66; }
.meta div { display: grid; grid-template-columns: 128px auto; align-items: center; height: 21px; white-space: nowrap; }
.meta dt { font: 13px/18px Roboto, sans-serif; color: #20364f; padding-bottom: 3px; }
.meta dd { display: flex; align-items: center; gap: 5px; padding-top: 2px; }
.meta dd svg { width: 20px; height: 20px; margin-left: -2px; }
.meta .meta__lock { width: 249px; height: 24px; border-bottom: 1px solid #999; margin-bottom: 3px; }
.meta em { font-style: normal; border: 1px solid #777; border-radius: 3px; line-height: 14px; padding: 0 2px; }
.desc { font: 13px/20px Roboto, sans-serif; color: #20364f; padding: 4px 0 0 4px; }
.detail h2 { font: 300 14px/20px "Open Sans", sans-serif; color: #111; padding: 5px 0 0 6px; }
.detail .bar { min-height: 162px; }
.log { border-top: 1px solid #ccc; height: 23px; padding: 4px 3px 0; color: #111; }
.edge { flex: none; width: 15px; margin-right: 4px; background: linear-gradient(#eef3f6 80px, #cfdbe4 80px, #dde6ec 200px, #cfdae2 440px, #e9eef1 460px); }
.edge span { writing-mode: vertical-rl; font: 12px/15px "DejaVu Sans", sans-serif; color: #8fa0ac; padding-top: 4px; }

.status { display: flex; height: 24px; align-items: center; margin-right: 5px; background: #eee; padding: 0 0 0 5px; color: #333; }
.status__n { width: 39px; height: 22px; line-height: 22px; text-align: center; border-left: 1px solid #ccc; padding-right: 2px; }
.status svg { width: 19px; height: 22px; padding: 12px 2px 0 7px; border-left: 1px solid #ccc; }
```
FILE: app.js
```javascript
const icon = (id, cls = "") => `<svg class="${cls}"><use href="#${id}"/></svg>`;
const PLUS = '<button aria-label="Expandir"><svg viewBox="0 0 9 9"><path d="M4.500 0v9M0 4.500h9" stroke="#8c8c8c" stroke-width="2"/></svg></button>';
const MINUS = '<button aria-label="Contraer"><svg viewBox="0 0 9 9"><path d="M0 4.500h9" stroke="#222" stroke-width="2"/></svg></button>';
const row = (ic, text, toggle = PLUS) =>
  `<div class="row ${/^(asm|part)/.test(ic) ? "row--part" : ""}">${toggle}<span class="stub"></span>${icon(ic)}<span>${text}</span></div>`;
const li = (...a) => `<li>${row(...a)}</li>`;
const LEAF = '<span class="leaf"></span>';

const folders = li("folder", "Estados del modelo: [Principal]") + li("folder", "Relaciones") +
  li("rep", "Representaciones") + li("folder", "Origen");
const children = [
  ["asmpin", "100002349-Lower Full Assembly:1"], ["asm", "100002426-Back Frame Main Assembly:1"],
  ["asm", "100002445-Headrest:1"], ["part", "100002334-Spring Holder Pin:1"],
  ["part", "100002335-Side Handle Pivot Pin:1"], ["part", "100002336-Bell Crank Side Handle:1"],
  ["part", "100002337-Rear Pivot Lock Plate:1"], ["part", "100002338-Rear Tilt Spring:1"],
  ["part", "100002339-Wire Holder A:1"], ["part", "100002340-Wire Holder B:1"],
  ["part", "100002341-Side Link Bar:1"], ["part", "100002342-Side Cover:1"],
  ["part", "100002333-Handle:1"], ["part", "100002343-Power Switch Control:1"],
  ["part", "100002344-Power Switch Tab:1"], ["partsub", "100002345-Control Switch Connector:1"],
  ["partpin", "100002346-Upper Seat Cover:1"], ["partpin", "100002347-Lower Seat Cushion:1"],
  ["part", "100002348-Upper Seat Cushion:1"], ["plane", "Work Plane2"],
  ["flush", "Flush:1", LEAF], ["flush", "Flush:2", LEAF], ["flush", "Flush:3", LEAF]
];
document.getElementById("tree").innerHTML = folders +
  `<li>${row("asm", "100002332-Car Seat:1", MINUS)}<ul>${folders}${children.map(c => li(...c)).join("")}</ul></li>` +
  li("asm", "100002449-Car Seat_MIR:1");

const parts = ["333-XX-XX-HANDLE", "334-XX-XX-SPRING HOLDER PIN", "335-XX-XX-SIDE HANDLE PIVOT PIN",
  "336-XX-XX-BELL CRANK SIDE HANDLE", "337-XX-XX-REAR PIVOT LOCK PLATE", "338-XX-XX-REAR TILT SPRING",
  "339-XX-XX-WIRE HOLDER A", "340-XX-XX-WIRE HOLDER B", "341-XX-XX-SIDE LINK BAR", "342-XX-XX-SIDE COVER",
  "343-XX-XX-POWER SWITCH CONTROL", "344-XX-XX-POWER SWITCH TAB", "345-XX-XX-CONTROL SWITCH CONNECTOR",
  "346-XX-XX-UPPER SEAT COVER"];
document.getElementById("bom").innerHTML =
  `<li class="bom__top"><button class="twist" aria-label="Contraer">${icon("chev")}</button><span class="d">D</span>${icon("card", "card card--dark")}${icon("shapes", "shape")}<span class="label">100002332-XX-XX-CAR SEAT-001</span></li>` +
  parts.map(p => `<li><span class="d">D</span>${icon("card", "card")}${icon("cubebold", "cb")}<span class="label">100002${p}-001</span></li>`).join("") +
  `<li><span class="d"></span>${icon("card", "card")}${icon("cubebold", "cb")}</li>`;

/* Engine model */
let seed = 7;
const rnd = () => (seed = (seed * 16807) % 2147483647) / 2147483647;
const shape = (d, fill, extra = "") => `<path d="${d}" fill="${fill}" ${extra}/>`;
const line = (d, color, w) => `<path d="${d}" fill="none" stroke="${color}" stroke-width="${w}" stroke-linecap="round" stroke-linejoin="round"/>`;
const pipe = (d, w) => line(d, "#505054", w) + line(d, "#656568", w - 5) + line(d, "#77777a", w * 0.72) + line(d, "#858588", w * 0.46) + line(d, "#8f8f92", w * 0.2);
/* Scatter small squares over a slanted box: origin, two edge vectors */
const scatter = (n, x, y, ax, ay, bx, by, s, colors) => {
  let out = "";
  for (let i = 0; i < n; i++) {
    const u = rnd(), v = rnd(), k = s * (0.6 + rnd() * 0.8);
    out += `<rect x="${(x + ax * u + bx * v).toFixed(0)}" y="${(y + ay * u + by * v).toFixed(0)}" width="${k.toFixed(0)}" height="${k.toFixed(0)}" rx="2" fill="${colors[i % colors.length]}"/>`;
  }
  return out;
};
const MIX = ["#0c0c0e", "#4a4a4e", "#939397", "#77777b", "#2b2b2e", "#67676b"];
const INK = ["#0b0b0c"];
let e = "";
/* fastener rods */
const rods = [[640, 385, 850, 262], [640, 372, 834, 276], [650, 405, 882, 286], [780, 410, 895, 350], [640, 480, 890, 391], [800, 388, 1002, 434],
  [770, 434, 932, 472], [700, 560, 914, 438], [700, 470, 866, 510], [700, 610, 938, 490], [700, 520, 830, 608], [740, 752, 922, 692],
  [628, 780, 690, 750], [562, 762, 600, 745], [530, 750, 560, 735], [722, 803, 985, 665], [1110, 585, 1248, 538], [405, 680, 448, 716], [500, 725, 550, 702], [700, 628, 854, 590], [690, 620, 846, 568], [670, 600, 815, 546], [660, 585, 800, 522], [650, 575, 780, 495]];
for (let i = 0; i < 20; i++) rods.push([590 + i * 3, 400 + i * 11, 760 + (i % 5) * 10, 330 + i * 12]);
rods.forEach(([a, b, c, d], i) => {
  e += line(`M${a} ${b}L${c} ${d}`, "#151517", i > 23 ? 6 : 5);
  if (i < 24 || i % 2) e += `<rect x="${c - 6}" y="${d - 6}" width="12" height="11" fill="#050505"/>`;
});
[[722, 803], [628, 780], [562, 762], [530, 750], [740, 752], [1128, 757], [1074, 526], [511, 132], [768, 328], [804, 352], [916, 412], [838, 446]].forEach(([x, y]) => {
  e += `<rect x="${x - 7}" y="${y - 6}" width="14" height="12" fill="#050505"/>`;
});
e += scatter(50, 640, 370, 110, 0, 10, 230, 10, ["#111", "#333", "#55555a", "#7b48d8", "#aab4c4"]);
/* loop pipe */
e += pipe("M650 352C740 335 800 345 799 405C799 455 780 490 735 508L690 522", 38);
e += line("M640 425L745 378M645 462L760 412M650 500L770 450M655 535L770 488", "#1a1a1c", 6);
/* block and head side */
e += shape("M128 455L160 422L215 438L300 425L400 480L470 450L540 400L706 290L712 345L640 365L600 400L560 560L490 690L375 724L330 690L290 735L180 650L125 640L104 520Z", "#646468");
e += shape("M395 412L710 245L712 330L560 420L430 505L395 480Z", "#5b5b5f");
e += scatter(80, 405, 415, 300, -165, 30, 85, 12, MIX);
e += scatter(170, 140, 440, 290, 60, 30, 190, 13, MIX);
e += scatter(70, 400, 500, 150, -60, 40, 190, 12, MIX);
e += scatter(40, 400, 470, 150, -60, 20, 220, 14, ["#77777b", "#858589"]);
/* intake plenum */
e += shape("M70 288L68 232L98 188L150 165L250 104L345 64L382 62L392 112L412 128L300 190L205 245L200 300L140 300L112 290Z", "#66666a");
e += shape("M84 286Q72 246 138 192L300 108L368 74L388 112L190 230L150 262L130 296Z", "#7f7f82");
e += line("M78 270Q80 220 140 184L250 120L370 68", "#2b2b2d", 4);
e += line("M374 70L386 112L408 128M386 114L196 230L140 268L134 296", "#2b2b2e", 5);
e += shape("M80 288L88 246L136 208L158 240L130 300Z", "#707073");
/* runners */
e += shape("M205 240L400 130L470 125L485 160L330 270L240 300Z", "#68686c");
["M420 158L465 140", "M345 195L440 160", "M285 230L370 195", "M225 265L320 235", "M165 285L230 262"].forEach(d => { e += pipe(d, 38); });
e += line("M285 192L305 205L290 218M335 172L350 182M210 240L222 262M425 178L445 170M355 214L378 206M285 252L305 245M395 122L408 132", "#161618", 8);
/* cam covers */
e += shape("M235 295L250 272L535 124Q560 116 590 146L592 170L330 318L300 330Z", "#8e8e92");
e += shape("M250 272L535 124Q552 118 570 130L275 292Z", "#9b9b9f");
e += shape("M295 322L590 164L660 184L360 350Z", "#737378");
e += scatter(85, 310, 315, 270, -148, 40, 16, 12, ["#111", "#a2a2a6", "#555", "#8c8c92", "#8c8c92"]);
e += shape("M340 346L640 186Q690 178 708 214L716 245L408 412L390 376Z", "#8c8c90");
e += shape("M340 346L640 186Q672 182 690 196L385 370Z", "#98989b");
e += line("M410 412L716 246", "#2f2f32", 4);
e += line("M370 240L385 222L392 240ZM400 228L415 208L425 224ZM428 212L455 196", "#818185", 3);
e += line("M462 292L490 288M482 274L512 276M506 264L525 262M540 248L556 256M520 282L548 268M484 300L488 302M528 262L556 262", "#0b0b0c", 11);
[[482, 348], [550, 315], [618, 272], [690, 238], [412, 386]].forEach(([x, y]) => { e += line(`M${x} ${y}v28`, "#111", 10); });
e += scatter(22, 415, 425, 285, -155, 6, 20, 10, INK);
/* timing case */
e += shape("M98 325L110 308L150 318L190 290L240 296L345 345L395 390L402 440L372 484L310 470L250 440L200 384L180 370L140 382L112 370Z", "#5e5e62");
e += scatter(80, 180, 310, 165, 75, 20, 75, 13, MIX);
e += line("M190 296L240 302L335 352Q392 388 388 450L378 470", "#3a3a3c", 20);
e += line("M190 296L240 302L335 352Q392 388 388 450L378 470", "#808083", 14);
e += scatter(16, 105, 315, 70, -10, 10, 50, 14, MIX);
e += scatter(16, 200, 330, 150, 70, 10, 60, 14, INK);
/* accessory belt and pulleys */
e += shape("M245 440Q285 420 320 460L300 475Z", "#8c8c90");
e += line("M118 525L132 500L330 590Q366 618 358 660L340 700", "#303032", 34);
e += line("M118 525L132 500L330 590Q366 618 358 660L340 700", "#7c7c80", 27);
e += shape("M160 520L230 540L245 585L190 580Z", "#88888c");
e += '<ellipse cx="122" cy="534" rx="20" ry="26" fill="#747477" stroke="#333" stroke-width="4"/><ellipse cx="138" cy="612" rx="24" ry="34" fill="#6c6c70" stroke="#333" stroke-width="4"/><ellipse cx="318" cy="648" rx="34" ry="40" fill="#68686c" stroke="#2a2a2c" stroke-width="5"/>';
e += shape("M155 590L205 605L255 625Q295 650 286 708L262 742Q225 758 200 728Q176 700 180 660Z", "#747477");
e += '<ellipse cx="232" cy="685" rx="50" ry="58" fill="#7f7f82" stroke="#606064" stroke-width="3"/><ellipse cx="224" cy="682" rx="28" ry="34" fill="#66666a"/>';
e += scatter(12, 204, 655, 38, 10, 0, 48, 11, INK);
e += scatter(16, 295, 620, 40, 20, 5, 48, 11, ["#0d0d0e", "#7c4bd6", "#88888c"]);
e += line("M120 572L158 578L182 636M205 440L222 502M268 500V580M318 510V590M400 560Q395 640 435 662M280 738L340 700L375 722L475 680M330 596L400 560", "#1c1c1e", 5);
e += line("M300 620V590M252 480L245 550", "#808084", 12);
/* exhaust headers */
e += pipe("M505 435Q530 440 530 470C528 540 480 570 486 625C492 705 580 725 735 722C850 712 890 690 975 648L1090 592", 50);
e += pipe("M518 430C528 500 496 560 502 618C510 685 590 690 700 686C800 680 860 642 960 612L1090 575", 42);
e += pipe("M600 384C622 450 562 530 564 578C574 645 650 645 745 648C820 645 870 608 945 590L1090 555", 44);
e += pipe("M430 470L470 455M580 388Q600 366 622 390M640 350L690 345", 36);
e += shape("M925 580L1100 532L1140 536L1128 590L980 668Z", "#78787b");
e += line("M940 595Q1020 580 1118 555M965 630Q1040 610 1115 575", "#8e8e91", 14);
e += line("M960 612Q1040 596 1110 566", "#5d5d61", 4);
e += line("M1110 562L1246 502", "#535357", 58) + line("M1110 560L1246 500", "#707073", 52) + line("M1112 552L1244 494", "#828285", 28);
e += line("M925 578Q955 574 968 604Q985 640 988 668M1118 536L1124 552M1135 580L1248 536", "#1a1a1c", 5);
[[960, 586], [974, 606], [980, 634], [988, 666], [926, 578], [590, 711]].forEach(([x, y]) => { e += `<rect x="${x - 5}" y="${y - 5}" width="10" height="10" fill="#000"/>`; });
/* loose bolts and sketch marks */
e += scatter(26, 400, 470, 90, -40, 60, 220, 11, INK);
e += scatter(14, 540, 620, 30, 10, 20, 40, 10, INK);
e += scatter(22, 760, 380, 60, -10, 20, 220, 10, INK);
e += scatter(34, 640, 360, 170, 30, -20, 250, 6, ["#7a3fe0", "#9a6cf0"]);
e += scatter(22, 200, 440, 250, 30, 70, 250, 5, ["#7a3fe0", "#8f62ea"]);
e += line("M650 575L705 620M705 575L655 625M680 560V630M640 600H720M650 470V600M365 690V740M920 690V720M795 735V750M815 450L800 480", "#8350e6", 3);
document.getElementById("engine").innerHTML = e;
```
